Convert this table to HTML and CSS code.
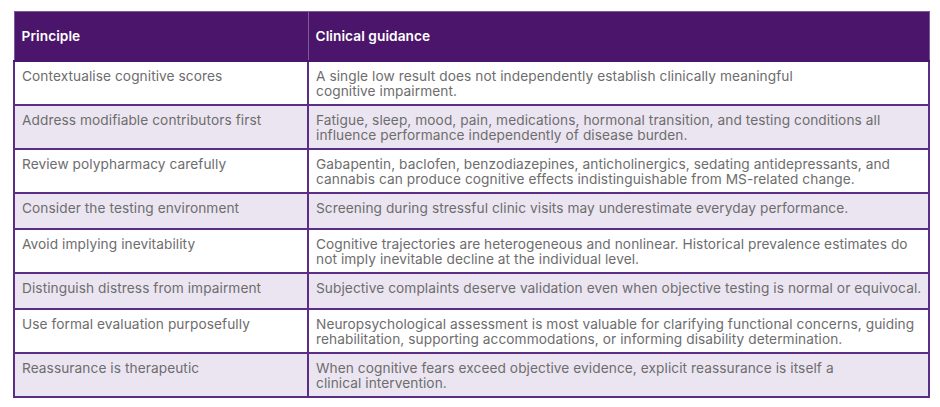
FILE: index.html
```html
<!DOCTYPE html>
<html lang="en">
<head>
<meta charset="utf-8">
<title>Cognitive guidance</title>
<link rel="stylesheet" href="styles.css">
</head>
<body>
<table class="guide">
  <colgroup><col class="c1"><col class="c2"></colgroup>
  <thead>
    <tr><th>Principle</th><th>Clinical guidance</th></tr>
  </thead>
  <tbody>
    <tr class="two"><td>Contextualise cognitive scores</td><td>A single low result does not independently establish clinically meaningful<br>cognitive impairment.</td></tr>
    <tr class="two"><td>Address modifiable contributors first</td><td>Fatigue, sleep, mood, pain, medications, hormonal transition, and testing conditions all influence performance independently of disease burden.</td></tr>
    <tr class="two"><td>Review polypharmacy carefully</td><td>Gabapentin, baclofen, benzodiazepines, anticholinergics, sedating antidepressants, and cannabis can produce cognitive effects indistinguishable from MS-related change.</td></tr>
    <tr class="one"><td>Consider the testing environment</td><td>Screening during stressful clinic visits may underestimate everyday performance.</td></tr>
    <tr class="two"><td>Avoid implying inevitability</td><td>Cognitive trajectories are heterogeneous and nonlinear. Historical prevalence estimates do not imply inevitable decline at the individual level.</td></tr>
    <tr class="one"><td>Distinguish distress from impairment</td><td>Subjective complaints deserve validation even when objective testing is normal or equivocal.</td></tr>
    <tr class="two"><td>Use formal evaluation purposefully</td><td>Neuropsychological assessment is most valuable for clarifying functional concerns, guiding rehabilitation, supporting accommodations, or informing disability determination.</td></tr>
    <tr class="two"><td>Reassurance is therapeutic</td><td>When cognitive fears exceed objective evidence, explicit reassurance is itself a<br>clinical intervention.</td></tr>
  </tbody>
</table>
</body>
</html>
```
FILE: styles.css
```css
html, body {
  margin: 0;
  background: #ffffff;
}
body {
  padding: 11px 0 0 13px;
  font-family: Inter, "Noto Sans", "Liberation Sans", sans-serif;
}
.guide {
  border-collapse: collapse;
  width: 915px;
  table-layout: fixed;
  font-size: 13.7px;
  line-height: 15px;
  letter-spacing: 0.07px;
}
.c1 { width: 294px; }
.c2 { width: 621px; }
.guide th {
  background: #4a156a;
  color: #ffffff;
  font-weight: 600;
  text-align: left;
  height: 48px;
  padding: 0 7px;
  vertical-align: middle;
  border: 1px solid #7c5a98;
  border-bottom: 2px solid #4a156a;
}
.guide th + th {
  border-left: 1px solid #9d86b2;
}
.guide td {
  color: #6d6d6d;
  vertical-align: top;
  padding: 7px 4px 5px 7px;
  border: 2px solid #5c2d86;
}
.guide tbody tr:nth-child(even) td {
  background: #ebe5f1;
}
.guide tbody tr:nth-child(odd) td {
  background: #ffffff;
}
.guide tr.one td {
  height: 22px;
}
```
